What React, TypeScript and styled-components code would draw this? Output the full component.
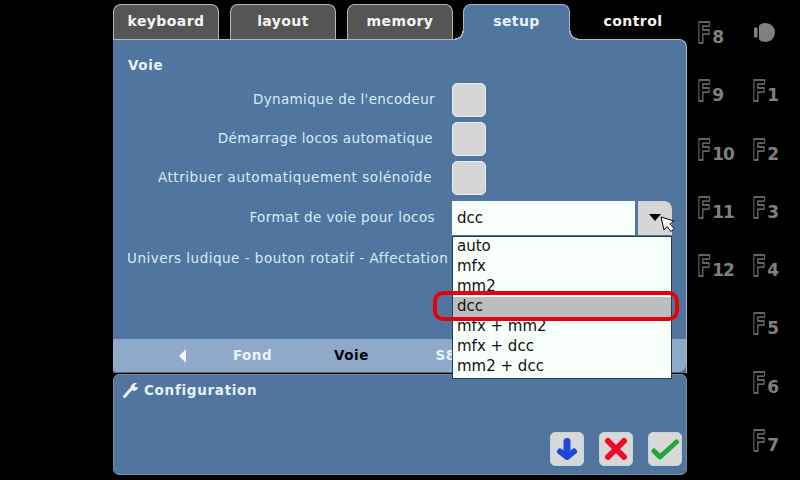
import React from "react"
import styled, { createGlobalStyle } from "styled-components"

const FONT = `"DejaVu Sans", sans-serif`
const PANEL_BLUE = "#50759f"
const EDGE = "#a9b8c6"

const GlobalStyle = createGlobalStyle`
	html, body {
		margin: 0;
		padding: 0;
		background: #000;
	}
`

const ScreenElement = styled.div`
	width: 800px;
	height: 480px;
	position: relative;
	overflow: hidden;
	background: #000;
	display: flex;
	font-family: ${FONT};
	padding-left: 113px;
	box-sizing: border-box;
`

const MainElement = styled.div`
	width: 574px;
	display: flex;
	flex-direction: column;
`

const TabBarElement = styled.div`
	height: 35px;
	margin-top: 4px;
	display: flex;
	gap: 11px;
	position: relative;
	z-index: 1;
`

const TabElement = styled.div<{ $plain?: boolean }>`
	width: 106px;
	height: 35px;
	box-sizing: border-box;
	border-radius: 8px 8px 0 0;
	border: 1px solid ${props => props.$plain ? "transparent" : EDGE};
	border-bottom: none;
	background: ${props => props.$plain ? "transparent" : "#555"};
	color: #f4f4f4;
	font-size: 14px;
	font-weight: 700;
	letter-spacing: 0.42px;
	text-align: center;
	padding-top: 8px;
`

const ActiveTabElement = styled(TabElement)`
	width: 107px;
	height: 36px;
	margin: 0 -1px 0 -1px;
	position: relative;
	background: ${PANEL_BLUE};
	color: #e6f3fb;

	&::before, &::after {
		content: "";
		position: absolute;
		bottom: 0;
		width: 9px;
		height: 9px;
	}

	&::before {
		left: -9px;
		background: radial-gradient(circle at 0 0, #000 7px, ${EDGE} 7.5px, ${EDGE} 8.5px, ${PANEL_BLUE} 9px);
	}

	&::after {
		right: -9px;
		background: radial-gradient(circle at 100% 0, #000 7px, ${EDGE} 7.5px, ${EDGE} 8.5px, ${PANEL_BLUE} 9px);
	}
`

const PanelElement = styled.div`
	height: 334px;
	box-sizing: border-box;
	background: ${PANEL_BLUE};
	border: 1px solid ${EDGE};
	border-bottom: none;
	border-left: none;
	border-radius: 0 8px 0 0;
	display: flex;
	flex-direction: column;
`

const PanelBodyElement = styled.div`
	flex: 1;
	padding: 17px 14px 0 15px;
`

const HeadingElement = styled.div`
	font-size: 13.5px;
	font-weight: 700;
	color: #e6f3fb;
	letter-spacing: 0.6px;
	line-height: 17px;
	margin-bottom: 9px;
`

const RowElement = styled.div<{ $gap?: number }>`
	height: 34px;
	margin-bottom: ${props => props.$gap ?? 5}px;
	display: flex;
	align-items: center;
`

const RowLabelElement = styled.div<{ $spacing?: number, $inset?: number }>`
	width: 307px;
	box-sizing: border-box;
	text-align: right;
	color: #d8ecf6;
	font-size: 13.5px;
	letter-spacing: ${props => props.$spacing ?? 0.4}px;
	white-space: nowrap;
	margin-right: 17px;
	line-height: 17px;
	padding: 0 ${props => props.$inset ?? 0}px 2px 0;
`

const CheckBoxElement = styled.div`
	width: 34px;
	height: 34px;
	box-sizing: border-box;
	background: #d6d6d6;
	border: 1px solid #e8f0f4;
	border-radius: 5px;
`

const ComboFieldElement = styled.div`
	width: 183px;
	height: 34px;
	box-sizing: border-box;
	background: #f8fffb;
	color: #111;
	font-size: 15px;
	padding: 7px 5px;
	line-height: 20px;
`

const ComboButtonElement = styled.div`
	width: 34px;
	height: 34px;
	margin-left: 3px;
	box-sizing: border-box;
	background: #d6d6d6;
	border-radius: 0 8px 0 0;
	display: flex;
	justify-content: center;
	padding-top: 13px;
`

const ComboCaretElement = styled.div`
	width: 0;
	height: 0;
	border-left: 6.5px solid transparent;
	border-right: 6.5px solid transparent;
	border-top: 7px solid #000;
`

const AffectationLabelElement = styled.div`
	color: #d8ecf6;
	font-size: 13.5px;
	letter-spacing: 0.5px;
	white-space: nowrap;
	line-height: 17px;
	margin-left: -1px;
	padding-top: 2px;
`

const SubTabBarElement = styled.div`
	height: 34px;
	background: #8fa9c9;
	border-radius: 0 0 8px 4px;
	display: flex;
	align-items: center;
	padding: 0 0 1px 66px;
	font-size: 13.5px;
	font-weight: 700;
	letter-spacing: 0.5px;
	box-sizing: border-box;
	border-bottom: 1px solid #667;
`

const SubTabArrowElement = styled.div`
	width: 0;
	height: 0;
	border-top: 7px solid transparent;
	border-bottom: 7px solid transparent;
	border-right: 7px solid #eef6fb;
	margin: 2px 17px 0 0;
`

const SubTabElement = styled.div<{ $active?: boolean }>`
	width: 99px;
	text-align: center;
	color: ${props => props.$active ? "#050510" : "#e6f3fb"};
`

const FooterElement = styled.div`
	height: 101px;
	margin-top: 1px;
	box-sizing: border-box;
	background: ${PANEL_BLUE};
	border: 1px solid #7c8a9a;
	border-radius: 6px;
	display: flex;
	flex-direction: column;
	padding: 6px 4px 8px 8px;
`

const FooterTitleElement = styled.div`
	display: flex;
	align-items: center;
	gap: 4px;
	color: #e6f3fb;
	font-size: 13.5px;
	font-weight: 700;
	letter-spacing: 0.7px;
	line-height: 17px;
`

const FooterButtonsElement = styled.div`
	margin-top: auto;
	display: flex;
	justify-content: flex-end;
	gap: 15px;
`

const ActionButtonElement = styled.div`
	width: 34px;
	height: 34px;
	box-sizing: border-box;
	background: #d8d8d8;
	border: 1px solid #c8d2da;
	border-radius: 5px;
	display: flex;
	align-items: center;
	justify-content: center;
`

const DropdownElement = styled.div`
	position: absolute;
	left: 452px;
	top: 236px;
	width: 220px;
	height: 143px;
	box-sizing: border-box;
	background: #f8fffb;
	border: 1px solid #1d3f5c;
	color: #111;
	font-size: 15px;
	z-index: 2;
`

const DropdownItemElement = styled.div<{ $selected?: boolean }>`
	height: 20px;
	line-height: 18px;
	padding-left: 4px;
	background: ${props => props.$selected ? "#bdbdbd" : "transparent"};
`

const HighlightElement = styled.div`
	position: absolute;
	left: 433px;
	top: 291px;
	width: 246px;
	height: 30px;
	box-sizing: border-box;
	border: 4px solid #e8000c;
	border-radius: 10px;
	z-index: 3;
`

const CursorElement = styled.svg`
	position: absolute;
	left: 660px;
	top: 216px;
	z-index: 4;
`

const FunctionKeysElement = styled.div`
	width: 113px;
	display: grid;
	grid-template-columns: 55px 48px;
	grid-auto-rows: 58.3px;
	padding: 5px 0 0 10px;
	box-sizing: border-box;
`

const FunctionKeyElement = styled.div<{ $column: number, $row: number }>`
	grid-column: ${props => props.$column};
	grid-row: ${props => props.$row};
	display: flex;
	align-items: baseline;
	white-space: nowrap;
	height: 58px;
	line-height: 58px;
`

const FunctionLetterElement = styled.span`
	display: inline-block;
	font-size: 28px;
	font-weight: 700;
	color: #000;
	-webkit-text-stroke: 1.3px #808080;
	transform: scaleX(0.74);
	transform-origin: left center;
	will-change: transform;
	margin: 0 -4px 0 0;
`

const FunctionNumberElement = styled.span`
	font-size: 17px;
	font-weight: 700;
	letter-spacing: -1px;
	color: #808080;
`

const LightIconElement = styled.svg`
	grid-column: 2;
	grid-row: 1;
	margin: 18px 0 0 2px;
`

const SUBTABS = ["Fond", "Voie", "S88"]
const OPTIONS = ["auto", "mfx", "mm2", "dcc", "mfx + mm2", "mfx + dcc", "mm2 + dcc"]
const LEFT_KEYS = [8, 9, 10, 11, 12]
const RIGHT_KEYS = [1, 2, 3, 4, 5, 6, 7]

function FunctionKey(props: { number: number, column: number, row: number }) {
	return (
		<FunctionKeyElement $column={props.column} $row={props.row}>
			<FunctionLetterElement>F</FunctionLetterElement>
			<FunctionNumberElement>{props.number}</FunctionNumberElement>
		</FunctionKeyElement>
	)
}

function App() {
	return (
		<ScreenElement>
			<GlobalStyle />

			<MainElement>
				<TabBarElement>
					<TabElement>keyboard</TabElement>
					<TabElement>layout</TabElement>
					<TabElement>memory</TabElement>
					<ActiveTabElement>setup</ActiveTabElement>
					<TabElement $plain>control</TabElement>
				</TabBarElement>

				<PanelElement>
					<PanelBodyElement>
						<HeadingElement>Voie</HeadingElement>
						<RowElement>
							<RowLabelElement $spacing={0.35}>Dynamique de l'encodeur</RowLabelElement>
							<CheckBoxElement />
						</RowElement>
						<RowElement>
							<RowLabelElement $spacing={0.35} $inset={2}>Démarrage locos automatique</RowLabelElement>
							<CheckBoxElement />
						</RowElement>
						<RowElement $gap={6}>
							<RowLabelElement $spacing={0.55} $inset={3}>Attribuer automatiquement solénoïde</RowLabelElement>
							<CheckBoxElement />
						</RowElement>
						<RowElement>
							<RowLabelElement $spacing={0.4}>Format de voie pour locos</RowLabelElement>
							<ComboFieldElement>dcc</ComboFieldElement>
							<ComboButtonElement>
								<ComboCaretElement />
							</ComboButtonElement>
						</RowElement>
						<RowElement>
							<AffectationLabelElement>Univers ludique - bouton rotatif - Affectation</AffectationLabelElement>
						</RowElement>
					</PanelBodyElement>

					<SubTabBarElement>
						<SubTabArrowElement />
						{SUBTABS.map(tab => (
							<SubTabElement key={tab} $active={tab === "Voie"}>{tab}</SubTabElement>
						))}
					</SubTabBarElement>
				</PanelElement>

				<FooterElement>
					<FooterTitleElement>
						<svg width="18" height="18" viewBox="0 0 18 18">
							<path d="M2.5 15.5 L10.5 6.5" stroke="#eef6fb" strokeWidth="3" strokeLinecap="round" />
							<path d="M9 7 C8.5 3.5 11.5 1.5 15 2 L12.5 4.5 L13.5 6.5 L16 6 C16 9 13 10.5 10.5 9.5 Z" fill="#eef6fb" />
						</svg>
						Configuration
					</FooterTitleElement>
					<FooterButtonsElement>
						<ActionButtonElement>
							<svg width="26" height="26" viewBox="0 0 26 26">
								<path d="M13 5.5 V20" fill="none" stroke="#1f46d8" strokeWidth="7" strokeLinecap="round" />
								<path d="M6 15.5 L13 21 L20 15.5" fill="none" stroke="#1f46d8" strokeWidth="6" strokeLinecap="round" strokeLinejoin="round" />
							</svg>
						</ActionButtonElement>
						<ActionButtonElement>
							<svg width="26" height="26" viewBox="0 0 26 26">
								<path d="M5 5 L21 21 M21 5 L5 21" fill="none" stroke="#f00a2a" strokeWidth="6" strokeLinecap="round" />
							</svg>
						</ActionButtonElement>
						<ActionButtonElement>
							<svg width="30" height="26" viewBox="0 0 30 26">
								<path d="M4 15 L10 21 L26.5 6" fill="none" stroke="#22a83a" strokeWidth="5" strokeLinecap="round" strokeLinejoin="round" />
							</svg>
						</ActionButtonElement>
					</FooterButtonsElement>
				</FooterElement>
			</MainElement>

			<FunctionKeysElement>
				<LightIconElement width="22" height="20" viewBox="0 0 22 20">
					<rect x="0" y="4.5" width="3.5" height="10" fill="#808080" />
					<path d="M5 2.6 A9.5 9.5 0 1 1 5 16.4 Z" fill="#808080" />
				</LightIconElement>
				{LEFT_KEYS.map((key, index) => <FunctionKey key={key} number={key} column={1} row={index + 1} />)}
				{RIGHT_KEYS.map((key, index) => <FunctionKey key={key} number={key} column={2} row={index + 2} />)}
			</FunctionKeysElement>

			<DropdownElement>
				{OPTIONS.map(option => (
					<DropdownItemElement key={option} $selected={option === "dcc"}>{option}</DropdownItemElement>
				))}
			</DropdownElement>
			<HighlightElement />

			<CursorElement width="16" height="18" viewBox="0 0 16 18">
				<path d="M1 1 L4 14 L7 10.5 L11 15.5 L14 12.5 L10 8 L14 5 Z" fill="#fff" stroke="#000" strokeWidth="1" />
			</CursorElement>
		</ScreenElement>
	)
}

export default App
